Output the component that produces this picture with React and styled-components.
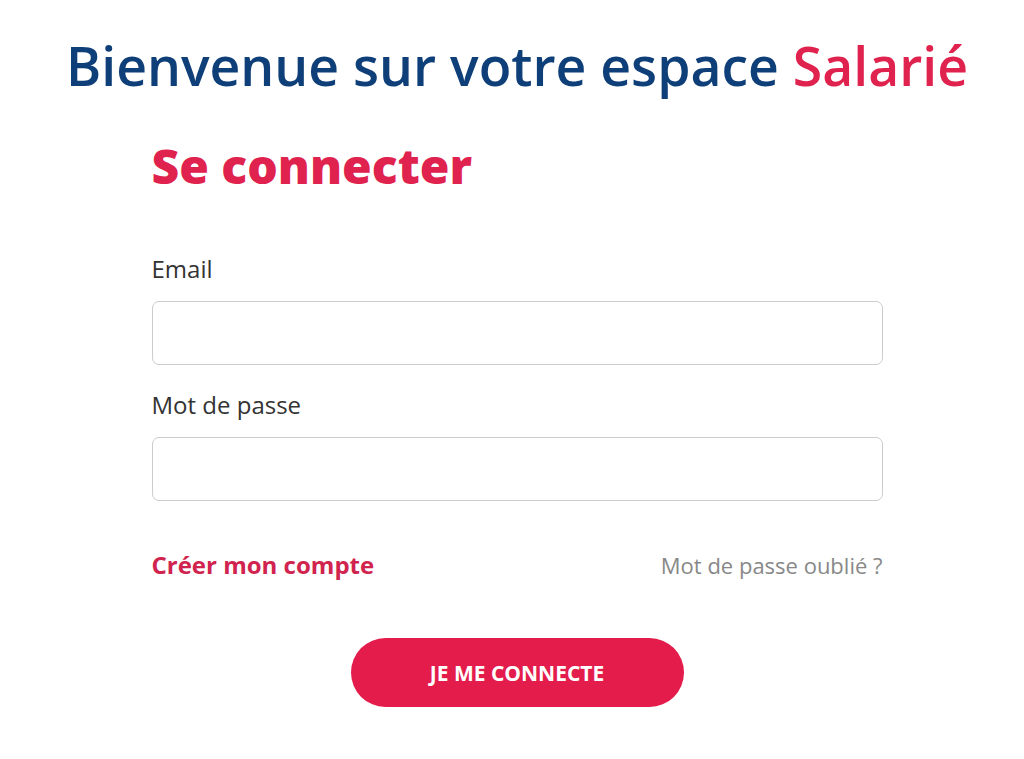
import styled, { createGlobalStyle } from "styled-components";

const GlobalStyle = createGlobalStyle`
  html, body {
    margin: 0;
    padding: 0;
    background: #ffffff;
  }
  body {
    font-family: "Open Sans", "Lato", sans-serif;
  }
  * {
    box-sizing: border-box;
  }
`;

function App() {
  return (
    <>
      <GlobalStyle />
      <Page>
        <Welcome>
          Bienvenue sur votre espace <Accent>Salarié</Accent>
        </Welcome>
        <Form onSubmit={(e) => e.preventDefault()}>
          <FormTitle>Se connecter</FormTitle>
          <Field>
            <Label htmlFor="email">Email</Label>
            <Input id="email" type="email" />
          </Field>
          <Field>
            <Label htmlFor="password">Mot de passe</Label>
            <Input id="password" type="password" />
          </Field>
          <LinksRow>
            <CreateLink href="#">Créer mon compte</CreateLink>
            <ForgotLink href="#">Mot de passe oublié ?</ForgotLink>
          </LinksRow>
          <SubmitWrap>
            <SubmitButton type="submit">Je me connecte</SubmitButton>
          </SubmitWrap>
        </Form>
      </Page>
    </>
  );
}

const Page = styled.div`
  width: 1024px;
  min-height: 759px;
  display: flex;
  flex-direction: column;
  align-items: center;
  padding: 30px 0 0 10px;
`;

const Welcome = styled.h1`
  margin: 0;
  font-family: "Open Sans", sans-serif;
  font-weight: 600;
  font-size: 53.5px;
  line-height: 72px;
  color: #0e3f78;
  text-align: center;
  white-space: nowrap;
`;

const Accent = styled.span`
  color: #e0224f;
`;

const Form = styled.form`
  width: 731px;
  margin-top: 36px;
  display: flex;
  flex-direction: column;
`;

const FormTitle = styled.h2`
  margin: 0 0 61px;
  font-family: "Open Sans", sans-serif;
  font-weight: 800;
  font-size: 48px;
  line-height: 56px;
  color: #e0224f;
`;

const Field = styled.div`
  display: flex;
  flex-direction: column;
  gap: 18px;
  margin-bottom: 26px;
`;

const Label = styled.label`
  font-size: 24px;
  line-height: 28px;
  color: #333333;
`;

const Input = styled.input`
  height: 64px;
  width: 100%;
  border: 1.5px solid #cccccc;
  border-radius: 7px;
  background: #ffffff;
  padding: 0 16px;
  font-size: 20px;
  outline: none;
`;

const LinksRow = styled.div`
  display: flex;
  justify-content: space-between;
  align-items: center;
  margin-top: 21px;
`;

const CreateLink = styled.a`
  font-size: 24px;
  font-weight: 700;
  color: #d0234e;
  text-decoration: none;
`;

const ForgotLink = styled.a`
  font-size: 22px;
  color: #888888;
  text-decoration: none;
`;

const SubmitWrap = styled.div`
  display: flex;
  justify-content: center;
  margin-top: 57px;
`;

const SubmitButton = styled.button`
  width: 333px;
  height: 69px;
  border: none;
  border-radius: 35px;
  background: #e31c4b;
  color: #ffffff;
  font-family: "Open Sans", sans-serif;
  font-weight: 700;
  font-size: 21px;
  text-transform: uppercase;
  cursor: pointer;
`;

export default App;
